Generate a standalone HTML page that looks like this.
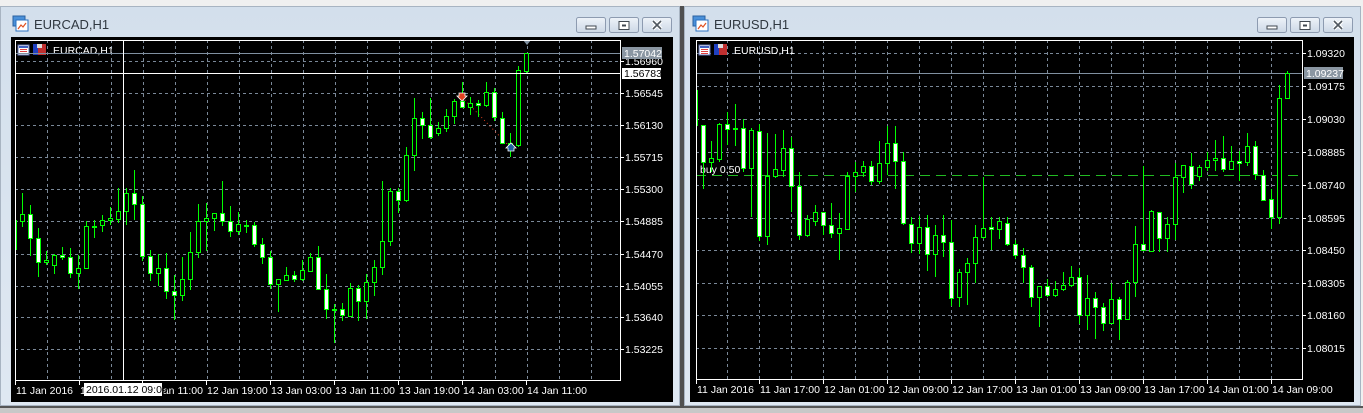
<!DOCTYPE html>
<html><head><meta charset="utf-8"><style>
html,body{margin:0;padding:0;width:1363px;height:413px;overflow:hidden;background:#f0f0f0}
svg{display:block}
text{font-family:"Liberation Sans",sans-serif}
</style></head><body>
<svg id="s" width="1363" height="413" xmlns="http://www.w3.org/2000/svg">
<defs>
<linearGradient id="btn" x1="0" y1="0" x2="0" y2="1"><stop offset="0" stop-color="#eef3f9"/><stop offset="1" stop-color="#ccd8e6"/></linearGradient>
<linearGradient id="win" x1="0" y1="0" x2="0" y2="1"><stop offset="0" stop-color="#d3dfec"/><stop offset="1" stop-color="#dfe8f2"/></linearGradient>
<clipPath id="c1"><rect x="15" y="40" width="605" height="340"/></clipPath>
<clipPath id="c2"><rect x="696" y="40" width="606" height="339"/></clipPath>
</defs>
<rect x="0" y="0" width="1363" height="6" fill="#f0f0f0"/>
<rect x="0" y="407" width="1363" height="6" fill="#c8c8c8"/>
<rect x="0" y="406" width="1363" height="2" fill="#555"/>
<rect x="0.5" y="6.5" width="679" height="399" fill="url(#win)" stroke="#a8b4c2"/>
<rect x="684.5" y="6.5" width="676" height="399" fill="url(#win)" stroke="#a8b4c2"/>
<rect x="680" y="6" width="4" height="402" fill="#505050"/>
<rect x="11" y="37" width="662" height="365" fill="#000"/>
<rect x="690" y="37" width="664" height="365" fill="#000"/>
<g id="chrome"></g>
<g id="g1"></g>
<g id="g2"></g>
</svg>
<script>
var NS="http://www.w3.org/2000/svg";
function el(p,t,a,txt){var e=document.createElementNS(NS,t);for(var k in a)e.setAttribute(k,a[k]);if(txt!=null)e.textContent=txt;p.appendChild(e);return e;}
var ch=document.getElementById('chrome');
function titleBar(x,title,bx){
  el(ch,'rect',{x:x,y:16,width:12,height:10,fill:'#4a90d9',stroke:'#2a60a0'});
  el(ch,'rect',{x:x+3,y:20,width:12,height:11,fill:'#fff',stroke:'#2a70c0'});
  el(ch,'polyline',{points:(x+5)+',29 '+(x+8)+',25 '+(x+10)+',27 '+(x+13)+',23',fill:'none',stroke:'#e05020','stroke-width':1.2});
  el(ch,'text',{x:x+21,y:29,'font-size':13,fill:'#303840'},title);
  bx.forEach(function(b,i){
    el(ch,'rect',{x:b+0.5,y:17.5,width:29,height:15,rx:2,fill:'url(#btn)',stroke:'#8d9bb0'});
    var cx=b+15;
    if(i==0) el(ch,'rect',{x:cx-5,y:26,width:10,height:3,fill:'#fff',stroke:'#404850'});
    if(i==1){el(ch,'rect',{x:cx-5,y:21.5,width:10,height:8,fill:'#fff',stroke:'#404850'});el(ch,'rect',{x:cx-2,y:24.5,width:4,height:2,fill:'#404850'});}
    if(i==2){el(ch,'path',{d:'M'+(cx-4)+' 21 L'+(cx+4)+' 29 M'+(cx+4)+' 21 L'+(cx-4)+' 29',stroke:'#fff','stroke-width':4});el(ch,'path',{d:'M'+(cx-4)+' 21 L'+(cx+4)+' 29 M'+(cx+4)+' 21 L'+(cx-4)+' 29',stroke:'#505860','stroke-width':1.6});}
  });
}
titleBar(13,'EURCAD,H1',[576,609,642]);
titleBar(693,'EURUSD,H1',[1257,1290,1323]);

function chart(g,o){
  var G=document.getElementById(g);
  o.hy.forEach(function(y){el(G,'line',{x1:o.L,x2:o.R,y1:y+0.5,y2:y+0.5,stroke:'#7a8898','stroke-dasharray':'3,3'});});
  o.vx.forEach(function(x){el(G,'line',{x1:x+0.5,x2:x+0.5,y1:o.T,y2:o.B,stroke:'#7a8898','stroke-dasharray':'3,3'});});
  var hx=o.L+3;
  el(G,'rect',{x:hx,y:45,width:11,height:10,fill:'#fff',stroke:'#6070b0'});
  el(G,'rect',{x:hx+1,y:46,width:9,height:2,fill:'#4060c0'});
  for(var i=0;i<3;i++)el(G,'rect',{x:hx+2,y:49+i*2,width:7,height:1,fill:'#e04040'});
  el(G,'rect',{x:hx+15,y:44,width:13,height:11,fill:'#c03030'});
  el(G,'rect',{x:hx+15,y:44,width:5,height:11,fill:'#2040c0'});
  el(G,'rect',{x:hx+19,y:44,width:5,height:4,fill:'#ddd'});
  el(G,'text',{x:hx+35,y:54,'font-size':10.5,fill:'#fff'},o.name);
  if(o.extra)o.extra(G);
  var cg=el(G,'g',{'clip-path':'url(#'+o.clip+')'});
  o.c.forEach(function(c){
    var x=c[0],bt=Math.round(c[1]),bb=Math.round(c[2]),wt=Math.round(c[3]),wb=Math.round(c[4]);
    el(cg,'line',{x1:Math.round(x)+0.5,x2:Math.round(x)+0.5,y1:wt,y2:wb,stroke:'#00ff00'});
    var h=Math.max(bb-bt,1);
    el(cg,'rect',{x:Math.round(x)-1.5,y:bt+0.5,width:4,height:h,fill:c[5]?'#fff':'#000',stroke:'#00ff00'});
  });
  if(o.after)o.after(G);
  el(G,'rect',{x:o.L+0.5,y:o.T+0.5,width:o.R-o.L,height:o.B-o.T,fill:'none',stroke:'#fff'});
  o.hy.forEach(function(y,i){el(G,'line',{x1:o.R,x2:o.R+4,y1:y+0.5,y2:y+0.5,stroke:'#fff'});el(G,'text',{x:o.R+5,y:y+4,'font-size':10.5,fill:'#fff'},o.pl[i]);});
  o.tl.forEach(function(t){el(G,'line',{x1:t[0]+0.5,x2:t[0]+0.5,y1:o.B,y2:o.B+5,stroke:'#fff'});el(G,'text',{x:t[0]+1,y:o.B+14,'font-size':10.5,fill:'#fff'},t[1]);});
  if(o.top)o.top(G);
}
var A=[[210,298,190,310,0],[193,212,128,230,0],[193,265,165,318,1],[265,337,234,380,1],[331,337,302,345,0],[316,346,312,371,0],[316,322,291,331,1],[322,370,294,383,1],[355,370,316,418,0],[229,355,212,358,0],[229,231,210,263,0],[211,226,195,245,0],[205,211,171,225,0],[184,206,115,218,0],[130,182,115,224,0],[130,163,60,210,1],[163,319,138,333,1],[319,370,299,392,1],[355,370,312,407,0],[355,424,309,446,1],[424,436,376,509,1],[388,436,321,452,0],[307,388,246,419,0],[214,307,162,323,0],[205,214,158,303,0],[190,205,190,242,0],[190,214,93,227,1],[214,244,168,260,1],[223,244,186,254,0],[226,228,210,248,0],[226,283,217,290,1]];
var B=[[552,592,535,612,1],[592,672,572,686,1],[658,672,658,755,0],[646,660,622,664,0],[646,658,634,665,1],[631,658,600,664,0],[592,632,580,636,0],[592,686,558,690,1],[686,748,642,776,1],[746,748,732,848,0],[748,766,730,782,1],[685,768,670,770,0],[685,724,674,782,1],[667,724,642,776,0],[622,667,600,707,0],[544,622,363,644,0],[394,544,385,558,0],[394,421,385,458,1],[286,421,262,426,0],[175,286,114,332,0],[175,196,156,236,1],[196,232,114,236,1],[205,218,186,228,0],[169,205,146,215,0],[124,169,117,192,0],[124,142,66,142,1],[130,142,112,166,0],[130,136,120,170,1],[97,136,66,142,0],[97,172,84,184,1],[175,250,156,252,1],[250,262,220,292,0],[31,254,18,260,0],[-21,33,-21,40,0]];
var C1=[];
A.forEach(function(c,k){C1.push([14.3+8*k,150+c[0]/3,150+c[1]/3,150+c[2]/3,150+c[3]/3,c[4]]);});
B.forEach(function(c,i){var k=31+i;C1.push([14.3+8*k,60+c[0]/3,60+c[1]/3,60+c[2]/3,60+c[3]/3,c[4]]);});
var vx1=[];for(var x=47;x<620;x+=32)vx1.push(x);
chart('g1',{L:15,R:620,T:40,B:380,clip:'c1',name:'EURCAD,H1',
 hy:[61,93,125,157,189,221,254,286,317,349],
 pl:['1.56960','1.56545','1.56130','1.55715','1.55300','1.54885','1.54470','1.54055','1.53640','1.53225'],
 vx:vx1,c:C1,
 tl:[[15,'11 Jan 2016'],[79,'12 Jan 03:00'],[142,'12 Jan 11:00'],[206,'12 Jan 19:00'],[270,'13 Jan 03:00'],[334,'13 Jan 11:00'],[398,'13 Jan 19:00'],[462,'14 Jan 03:00'],[526,'14 Jan 11:00']],
 extra:function(G){
  el(G,'line',{x1:15,x2:620,y1:53.5,y2:53.5,stroke:'#8090a0'});
  el(G,'line',{x1:462,x2:510,y1:97,y2:147,stroke:'#e04020','stroke-dasharray':'1,3'});
 },
 after:function(G){
  el(G,'line',{x1:15,x2:620,y1:73.5,y2:73.5,stroke:'#fff'});
  el(G,'line',{x1:123.5,x2:123.5,y1:40,y2:380,stroke:'#fff'});
  el(G,'path',{d:'M459 93 h6 v3 h2 l-5 5 l-5 -5 h2 z',fill:'#e04020',stroke:'#fff','stroke-width':0.8});
  el(G,'path',{d:'M508 151 h6 v-3 h2 l-5 -5 l-5 5 h2 z',fill:'#2060a0',stroke:'#fff','stroke-width':0.8});
  el(G,'path',{d:'M523 40 h8 l-4 5 z',fill:'#8090a0'});
 },
 top:function(G){
  el(G,'rect',{x:622,y:47,width:40,height:12,fill:'#8a96a2'});
  el(G,'text',{x:624,y:57,'font-size':10.5,fill:'#fff'},'1.57042');
  el(G,'rect',{x:621.5,y:67.5,width:40,height:12,fill:'#fff',stroke:'#000'});
  el(G,'text',{x:624,y:77,'font-size':10.5,fill:'#000'},'1.56783');
  el(G,'rect',{x:84,y:383,width:78,height:13,fill:'#fff'});
  el(G,'text',{x:86,y:393,'font-size':10.5,fill:'#000'},'2016.01.12 09:00');
 }
});
var R=[[-60,45,-80,45,1],[45,157,45,237,1],[145,157,93,187,0],[43,148,40,155,0],[43,57,5,105,1],[55,58,-18,107,0],[55,175,27,187,1],[61,175,55,322,0],[64,379,42,392,1],[199,377,70,404,0],[178,199,73,205,0],[115,181,60,200,0],[115,229,82,305,1],[229,376,187,389,1],[328,374,316,380,0],[307,334,286,347,0],[307,346,307,374,1],[346,370,280,385,1],[355,370,310,449,0],[199,358,187,360,0],[187,199,157,247,0],[169,187,154,202,0],[169,214,154,225,1],[160,214,92,223,0],[100,160,47,196,0],[100,154,48,238,1],[154,340,127,346,1],[343,400,322,430,1],[352,400,317,433,0],[352,433,316,482,1],[376,433,346,502,0],[376,397,316,440,1],[397,565,331,588,1],[487,562,478,592,0],[460,487,445,586,0],[382,460,346,520,0],[355,382,202,388,0],[352,358,322,420,1],[334,358,322,386,0],[340,403,322,409,1],[403,436,391,448,1],[436,472,415,520,1],[472,562,466,590,1],[529,562,529,650,0],[529,556,508,562,1],[538,556,514,562,0],[526,538,487,544,0],[502,526,469,532,0],[502,616,475,643,1],[565,616,496,661,0],[565,592,547,688,1],[592,640,580,664,1],[568,640,520,643,0],[568,628,562,691,1],[517,628,511,631,0],[403,517,349,562,0],[403,420,169,424,1],[304,424,300,427,0],[307,385,305,426,1],[343,385,322,427,0],[202,343,160,390,0],[166,202,166,250,0],[169,223,130,238,1],[172,199,166,214,0],[151,172,127,184,0],[145,151,91,184,0],[145,178,79,185,1],[154,178,108,178,0],[154,160,124,214,1],[109,157,70,169,0],[109,193,94,211,1],[196,271,181,274,1],[268,322,238,358,1],[-36,322,-75,343,0],[-111,-36,-117,-36,0]];
var C2=[];
R.forEach(function(c,i){var j=i-1;C2.push([703.3+8*j,110+c[0]/3,110+c[1]/3,110+c[2]/3,110+c[3]/3,c[4]]);});
var vx2=[];for(var x=727;x<1302;x+=32)vx2.push(x);
chart('g2',{L:696,R:1302,T:40,B:379,clip:'c2',name:'EURUSD,H1',
 hy:[53,86,119,152,185,218,250,283,315,348],
 pl:['1.09320','1.09175','1.09030','1.08885','1.08740','1.08595','1.08450','1.08305','1.08160','1.08015'],
 vx:vx2,c:C2,
 tl:[[696,'11 Jan 2016'],[759,'11 Jan 17:00'],[823,'12 Jan 01:00'],[887,'12 Jan 09:00'],[951,'12 Jan 17:00'],[1015,'13 Jan 01:00'],[1079,'13 Jan 09:00'],[1143,'13 Jan 17:00'],[1207,'14 Jan 01:00'],[1271,'14 Jan 09:00']],
 extra:function(G){
  el(G,'line',{x1:696,x2:1302,y1:73.5,y2:73.5,stroke:'#8090a0'});
  el(G,'line',{x1:696,x2:1302,y1:175.5,y2:175.5,stroke:'#22bb22','stroke-dasharray':'10,6'});
  el(G,'text',{x:700,y:173,'font-size':10.5,fill:'#fff'},'buy 0.50');
 },
 top:function(G){
  el(G,'rect',{x:1304,y:67,width:39,height:12,fill:'#8a96a2'});
  el(G,'text',{x:1306,y:77,'font-size':10.5,fill:'#fff'},'1.09237');
 }
});
</script>
</body></html>
